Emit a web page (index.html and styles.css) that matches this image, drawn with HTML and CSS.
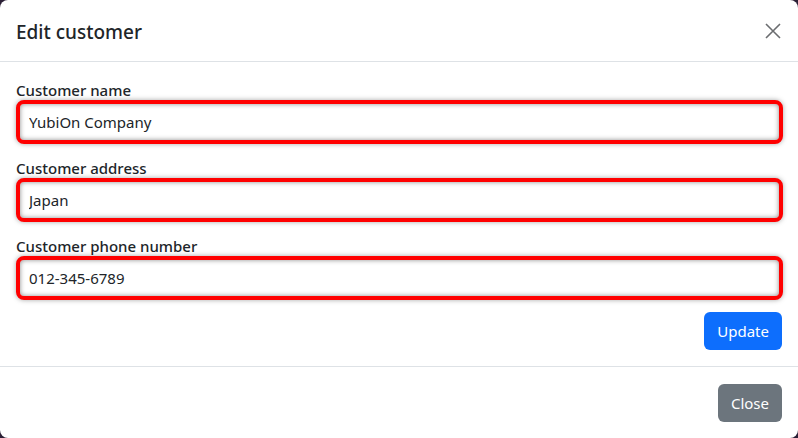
FILE: index.html
```html
<!DOCTYPE html>
<html lang="en">
<head>
<meta charset="utf-8">
<title>Edit customer</title>
<link rel="stylesheet" href="styles.css">
</head>
<body>
<div class="modal">
  <div class="modal-header">
    <h5 class="modal-title">Edit customer</h5>
    <button class="btn-close" type="button" aria-label="Close">
      <svg width="16" height="16" viewBox="0 0 16 16"><path d="M1 1L15 15M15 1L1 15" stroke="#6b6d70" stroke-width="1.6" fill="none"/></svg>
    </button>
  </div>
  <div class="modal-body">
    <div class="field">
      <label class="form-label">Customer name</label>
      <input class="form-control" type="text" value="YubiOn Company">
    </div>
    <div class="field">
      <label class="form-label">Customer address</label>
      <input class="form-control" type="text" value="Japan">
    </div>
    <div class="field">
      <label class="form-label">Customer phone number</label>
      <input class="form-control" type="text" value="012-345-6789">
    </div>
    <div class="actions">
      <button class="btn btn-primary" type="button">Update</button>
    </div>
  </div>
  <div class="modal-footer">
    <button class="btn btn-secondary" type="button">Close</button>
  </div>
</div>
</body>
</html>
```
FILE: styles.css
```css
html, body {
  margin: 0;
  padding: 0;
  height: 100%;
}
body {
  background: #2b2036;
  font-family: "Noto Sans", "Open Sans", sans-serif;
  color: #212529;
}
.modal {
  height: 100vh;
  box-sizing: border-box;
  background: #fff;
  border-radius: 8px;
  display: flex;
  flex-direction: column;
  overflow: hidden;
}
.modal-header {
  height: 62px;
  box-sizing: border-box;
  border-bottom: 1px solid #dee2e6;
  display: flex;
  align-items: center;
  justify-content: space-between;
  padding: 0 16px;
}
.modal-title {
  margin: 0;
  font-size: 19px;
  font-weight: 500;
  line-height: 24px;
  padding-top: 2px;
}
.btn-close {
  border: 0;
  background: transparent;
  padding: 0;
  width: 16px;
  height: 16px;
  margin-right: 1px;
  display: flex;
}
.modal-body {
  padding: 16px 16px 16px 16px;
  display: flex;
  flex-direction: column;
}
.field {
  display: flex;
  flex-direction: column;
  margin-bottom: 12px;
}
.form-label {
  font-size: 15px;
  font-weight: 500;
  line-height: 19px;
  height: 22px;
  box-sizing: border-box;
  padding-top: 3px;
}
.form-control {
  box-sizing: border-box;
  height: 44px;
  width: 767px;
  border: 4px solid #ff0000;
  border-radius: 8px;
  padding: 0 9px;
  font-family: inherit;
  font-size: 15px;
  color: #212529;
  background: #fff;
  box-shadow: inset 0 0 5px rgba(0,0,0,0.45), 0 0 5px rgba(0,0,0,0.35);
  outline: none;
}
.actions {
  display: flex;
  justify-content: flex-end;
}
.btn {
  font-family: inherit;
  font-size: 15px;
  line-height: 24px;
  height: 38px;
  padding: 0 13px;
  border: 0;
  border-radius: 6px;
  color: #fff;
}
.btn-primary {
  background: #0d6efd;
}
.btn-secondary {
  background: #6c757d;
}
.modal-footer {
  border-top: 1px solid #dee2e6;
  flex: 1;
  display: flex;
  justify-content: flex-end;
  align-items: center;
  padding: 0 16px;
}
```
